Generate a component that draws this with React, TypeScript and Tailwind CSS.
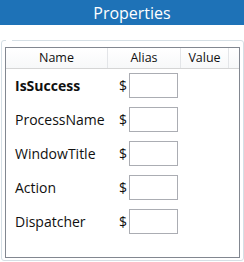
import React from 'react';

const fields = [
  { name: 'IsSuccess', bold: true },
  { name: 'ProcessName' },
  { name: 'WindowTitle' },
  { name: 'Action' },
  { name: 'Dispatcher' },
];

function App() {
  return (
    <div className="w-[244px] h-[262px] bg-white overflow-hidden font-['Open_Sans','Noto_Sans',sans-serif] text-[#101010]">
      <div className="h-[25px] bg-[#1e72b7] text-white text-[16px] leading-none flex items-center justify-center pl-[20px]">
        Properties
      </div>

      <div className="relative mt-[15px] ml-[1px] w-[243px] h-[221px] border border-[#d5dfe5] rounded-[3px] pt-[6px] px-[3px] pb-[2px]">
        {/* empty groupbox header gap */}
        <span className="absolute -top-[1px] left-[4px] w-[6px] h-[1px] bg-white" />

        <div className="h-full border border-[#828790] bg-white">
          <div className="grid grid-cols-[102px_73px_48px_1fr] h-[21px] border-b border-[#d5d5d5] bg-gradient-to-b from-white to-[#f7f8f9] text-[12.5px] leading-none">
            <div className="flex items-center justify-center border-r border-[#e3e5e8]">Name</div>
            <div className="flex items-center justify-center border-r border-[#e3e5e8]">Alias</div>
            <div className="flex items-center justify-center border-r border-[#e3e5e8]">Value</div>
            <div />
          </div>

          <div className="flex flex-col gap-[9px] pt-[4px]">
            {fields.map((f) => (
              <div key={f.name} className="grid grid-cols-[103px_1fr] h-[25px] items-center text-[14px]">
                <span className={'pl-[9px] ' + (f.bold ? 'font-bold' : '')}>{f.name}</span>
                <div className="flex items-center pl-[10px]">
                  <span className="w-[10px]">$</span>
                  <div className="w-[49px] h-[25px] border border-[#abadb3] bg-white" />
                </div>
              </div>
            ))}
          </div>
        </div>
      </div>
    </div>
  );
}

export default App;
